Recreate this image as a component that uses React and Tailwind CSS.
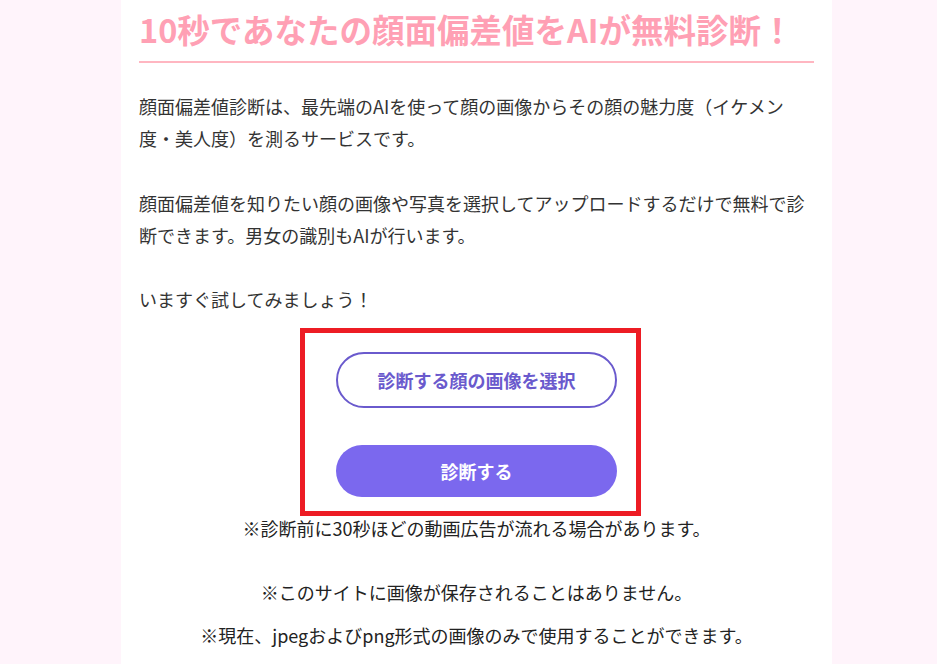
export default function App() {
  const font = { fontFamily: '"Noto Sans CJK JP", "Noto Sans", sans-serif' };

  return (
    <div className="min-h-[664px] bg-[#fff4fb]" style={font}>
      <div className="ml-[121px] w-[711px] bg-white px-[18px] pb-10 pt-[6px] text-[#333]">
        {/* Title */}
        <h2 className="border-b-2 border-[#ffb6c1] pb-[9px] text-[32.5px] font-bold leading-[46px] text-[#ffa0b4]">
          10秒であなたの顔面偏差値をAIが無料診断！
        </h2>

        {/* Intro */}
        <div className="mt-[27px] text-[18px] leading-[32px]">
          <p className="mb-[33px]">
            顔面偏差値診断は、最先端のAIを使って顔の画像からその顔の魅力度（イケメン
            <br />
            度・美人度）を測るサービスです。
          </p>
          <p className="mb-[32px]">
            顔面偏差値を知りたい顔の画像や写真を選択してアップロードするだけで無料で診
            <br />
            断できます。男女の識別もAIが行います。
          </p>
          <p>いますぐ試してみましょう！</p>
        </div>

        {/* Upload form */}
        <div className="ml-[161px] mt-[13px] w-[341px] border-[5px] border-[#ed1c24] px-[31px] pb-[14px] pt-[19px]">
          <button
            type="button"
            className="flex h-[56px] w-[281px] items-center justify-center rounded-full border-2 border-[#6a5acd] bg-white text-[18px] font-bold text-[#6a5acd]"
          >
            診断する顔の画像を選択
          </button>
          <button
            type="button"
            className="mt-[37px] flex h-[52px] w-[281px] items-center justify-center rounded-full bg-[#7b68ee] text-[18px] font-bold text-white"
          >
            診断する
          </button>
        </div>

        {/* Notes */}
        <div className="-mt-[4px] text-center text-[18px] leading-[32px] text-[#222]">
          <p className="mb-[32px]">※診断前に30秒ほどの動画広告が流れる場合があります。</p>
          <p className="mb-[11px]">※このサイトに画像が保存されることはありません。</p>
          <p>※現在、jpegおよびpng形式の画像のみで使用することができます。</p>
        </div>
      </div>
    </div>
  );
}
